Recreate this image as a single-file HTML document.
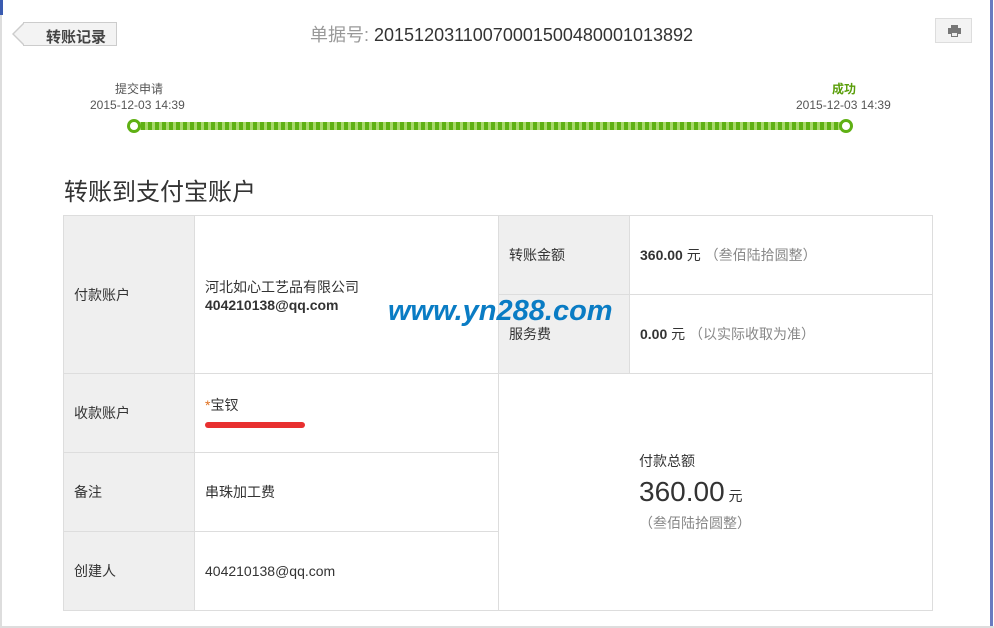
<!DOCTYPE html>
<html><head><meta charset="utf-8"><style>
body{margin:0;width:994px;height:628px;background:#fff;font-family:"Liberation Sans","Noto Sans CJK SC",sans-serif;color:#333;position:relative;overflow:hidden;font-size:14px}
.a{position:absolute}
.back{left:23px;top:22px;width:94px;height:24px;border:1px solid #ccc;background:#f3f3f3;box-sizing:border-box}
.back:before{content:"";position:absolute;left:-12px;top:-1px;border-right:12px solid #ccc;border-top:12px solid transparent;border-bottom:12px solid transparent}
.back:after{content:"";position:absolute;left:-10px;top:0;border-right:11px solid #f3f3f3;border-top:11px solid transparent;border-bottom:11px solid transparent}
table{position:absolute;left:63px;top:215px;border-collapse:collapse;width:870px}
td{border:1px solid #ddd;height:78px;padding:0 10px;font-size:14px;vertical-align:middle}
td.l{background:#efefef;width:110px}
b{font-weight:bold}
.g{color:#888}
</style></head><body>
<div class="a" style="left:0;top:0;width:3px;height:15px;background:#3a5bb0"></div>
<div class="a" style="left:0;top:15px;width:2px;height:613px;background:#ddd"></div>
<div class="a" style="left:990px;top:0;width:3px;height:628px;background:#6a7bc0"></div>
<div class="a" style="left:0;top:626px;width:994px;height:2px;background:#ddd"></div>
<div class="a back"><span class="a" style="left:22px;top:3px;font-size:15px;font-weight:bold;color:#444">转账记录</span></div>
<div class="a" style="left:310px;top:21px;font-size:18px;color:#333"><span style="color:#999">单据号:</span> 20151203110070001500480001013892</div>
<div class="a" style="left:935px;top:18px;width:37px;height:25px;border:1px solid #ddd;background:#f3f3f3;box-sizing:border-box">
<svg class="a" style="left:12px;top:6px" width="13" height="12"><rect x="3" y="0" width="7" height="3" fill="#777"/><rect x="0" y="3" width="13" height="6" fill="#777"/><rect x="3" y="7" width="7" height="5" fill="#777"/><rect x="4" y="8" width="5" height="3" fill="#eee"/></svg></div>
<div class="a" style="left:115px;top:80px;font-size:12px;color:#555">提交申请</div>
<div class="a" style="left:90px;top:98px;font-size:12px;color:#555">2015-12-03 14:39</div>
<div class="a" style="left:832px;top:80px;font-size:12px;color:#5a9e0a;font-weight:bold">成功</div>
<div class="a" style="left:796px;top:98px;font-size:12px;color:#555">2015-12-03 14:39</div>
<div class="a" style="left:134px;top:122px;width:712px;height:8px;background:repeating-linear-gradient(90deg,#5fb014 0 4px,#a8d86a 4px 7px)"></div>
<div class="a" style="left:127px;top:119px;width:8px;height:8px;border:3px solid #5fb014;border-radius:50%;background:#fff"></div>
<div class="a" style="left:839px;top:119px;width:8px;height:8px;border:3px solid #5fb014;border-radius:50%;background:#fff"></div>
<div class="a" style="left:64px;top:172px;font-size:24px;color:#333">转账到支付宝账户</div>
<table>
<tr><td class="l" rowspan="2" style="height:157px">付款账户</td><td rowspan="2" style="width:283px">河北如心工艺品有限公司<br><b>404210138@qq.com</b></td><td class="l">转账金额</td><td><b>360.00</b> 元 <span class="g">（叁佰陆拾圆整）</span></td></tr>
<tr><td class="l">服务费</td><td><b>0.00</b> 元 <span class="g">（以实际收取为准）</span></td></tr>
<tr><td class="l">收款账户</td><td><span style="color:#e07020">*</span>宝钗<br><span style="display:inline-block;width:100px;height:6px;background:#e83030;border-radius:3px;margin-top:4px"></span></td><td colspan="2" rowspan="3" style="padding-left:140px">付款总额<br><span style="font-size:28px;line-height:42px">360.00</span> 元<br><span class="g">（叁佰陆拾圆整）</span></td></tr>
<tr><td class="l">备注</td><td>串珠加工费</td></tr>
<tr><td class="l">创建人</td><td>404210138@qq.com</td></tr>
</table>
<div class="a" style="left:388px;top:295px;font-size:29px;font-weight:bold;font-style:italic;color:#0a7cc4">www.yn288.com</div>
</body></html>
